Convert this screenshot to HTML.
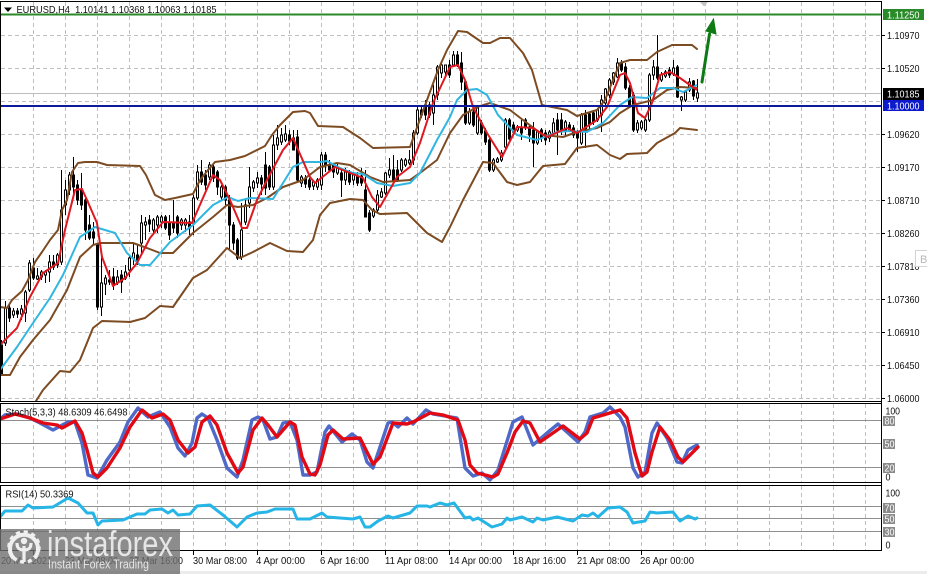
<!DOCTYPE html>
<html><head><meta charset="utf-8"><style>
html,body{margin:0;padding:0;background:#fff;width:927px;height:574px;overflow:hidden}
svg{display:block;position:absolute;left:0;top:0}
text{font-family:"Liberation Sans",sans-serif;font-size:10.5px;fill:#111}
</style></head><body>
<svg width="927" height="574" viewBox="0 0 927 574" xmlns="http://www.w3.org/2000/svg">
<rect width="927" height="574" fill="#fff"/>
<rect x="0" y="571" width="927" height="3" fill="#ececec"/>
<!-- grid -->
<g stroke="#c0c0c0" stroke-width="1" stroke-dasharray="4 3" fill="none" shape-rendering="crispEdges">
<path d="M1 35.5H881M1 68.5H881M1 101.5H881M1 134.5H881M1 167.5H881M1 200.5H881M1 233.5H881M1 266.5H881M1 299.5H881M1 332.5H881M1 365.5H881M1 398.5H881"/>
<path d="M33.5 2V401M65.5 2V401M97.5 2V401M129.5 2V401M161.5 2V401M193.5 2V401M225.5 2V401M257.5 2V401M289.5 2V401M321.5 2V401M353.5 2V401M385.5 2V401M417.5 2V401M449.5 2V401M481.5 2V401M513.5 2V401M545.5 2V401M577.5 2V401M609.5 2V401M641.5 2V401M673.5 2V401M705.5 2V401M737.5 2V401M769.5 2V401M801.5 2V401M833.5 2V401M865.5 2V401"/>
<path d="M33.5 404V483M65.5 404V483M97.5 404V483M129.5 404V483M161.5 404V483M193.5 404V483M225.5 404V483M257.5 404V483M289.5 404V483M321.5 404V483M353.5 404V483M385.5 404V483M417.5 404V483M449.5 404V483M481.5 404V483M513.5 404V483M545.5 404V483M577.5 404V483M609.5 404V483M641.5 404V483M673.5 404V483M705.5 404V483M737.5 404V483M769.5 404V483M801.5 404V483M833.5 404V483M865.5 404V483"/>
<path d="M33.5 486V551M65.5 486V551M97.5 486V551M129.5 486V551M161.5 486V551M193.5 486V551M225.5 486V551M257.5 486V551M289.5 486V551M321.5 486V551M353.5 486V551M385.5 486V551M417.5 486V551M449.5 486V551M481.5 486V551M513.5 486V551M545.5 486V551M577.5 486V551M609.5 486V551M641.5 486V551M673.5 486V551M705.5 486V551M737.5 486V551M769.5 486V551M801.5 486V551M833.5 486V551M865.5 486V551"/>
</g>
<path d="M1 93.5H881" stroke="#bdbdbd" stroke-width="1" shape-rendering="crispEdges"/>
<path d="M1 420.5H881M1 443.5H881M1 467.5H881M1 506.5H881M1 518.5H881M1 531.5H881" stroke="#8f8f8f" stroke-width="1" shape-rendering="crispEdges"/>
<!-- candles -->
<path shape-rendering="crispEdges" stroke="#000" stroke-width="1" fill="none" d="M1.5 340V375M5.5 301V346M9.5 305V322M13.5 308V318M17.5 308V318M21.5 305V320M25.5 290V322M29.5 260V292M33.5 258V280M37.5 268V280M41.5 270V280M45.5 270V283M49.5 255V282M53.5 255V270M57.5 253V268M61.5 170V265M65.5 180V215M69.5 172V195M73.5 157V195M77.5 180V205M81.5 173V210M85.5 195V240M89.5 215V240M93.5 222V245M97.5 243V310M101.5 250V316M105.5 275V295M109.5 270V285M113.5 268V290M117.5 270V285M121.5 270V293M125.5 265V280M129.5 255V277M133.5 243V265M137.5 245V265M141.5 215V255M145.5 217V240M149.5 215V232M153.5 218V235M157.5 215V233M161.5 215V228M165.5 215V230M169.5 215V240M173.5 200V233M177.5 215V238M181.5 218V230M185.5 218V232M189.5 215V235M193.5 195V235M197.5 165V200M201.5 160V185M205.5 170V190M209.5 162V180M213.5 165V182M217.5 170V195M221.5 185V200M225.5 185V205M229.5 195V250M233.5 222V250M237.5 238V260M241.5 203V260M245.5 200V225M249.5 167V208M253.5 180V192M257.5 172V188M261.5 175V195M265.5 152V195M269.5 165V190M273.5 135V190M277.5 125V150M281.5 128V145M285.5 125V142M289.5 130V145M293.5 130V150M297.5 130V182M301.5 175V187M305.5 175V188M309.5 178V190M313.5 180V190M317.5 178V190M321.5 152V190M325.5 152V172M329.5 160V172M333.5 163V178M337.5 163V175M341.5 170V197M345.5 168V185M349.5 170V185M353.5 172V185M357.5 172V186M361.5 168V186M365.5 170V217M369.5 210V232M373.5 208V218M377.5 190V212M381.5 188V198M385.5 172V195M389.5 158V178M393.5 155V182M397.5 160V182M401.5 158V172M405.5 158V167M409.5 150V165M413.5 130V165M417.5 107V135M421.5 105V118M425.5 100V120M429.5 102V118M433.5 85V125M437.5 65V100M441.5 62V78M445.5 65V78M449.5 60V78M453.5 51V67M457.5 51V67M461.5 52V90M465.5 80V125M469.5 108V125M473.5 108V127M477.5 105V135M481.5 120V135M485.5 128V145M489.5 138V172M493.5 158V172M497.5 157V163M501.5 150V162M505.5 118V150M509.5 118V141M513.5 122V135M517.5 125V132M521.5 120V140M525.5 118V130M529.5 125V142M533.5 122V167M537.5 130V145M541.5 128V142M545.5 130V145M549.5 130V142M553.5 118V135M557.5 113V155M561.5 113V135M565.5 120V135M569.5 122V132M573.5 125V138M577.5 130V152M581.5 113V145M585.5 110V148M589.5 112V130M593.5 110V125M597.5 108V122M601.5 95V132M605.5 88V105M609.5 78V98M613.5 72V85M617.5 58V78M621.5 60V72M625.5 63V90M629.5 85V107M633.5 92V132M637.5 120V133M641.5 120V130M645.5 118V132M649.5 73V122M653.5 60V80M657.5 35V80M661.5 72V82M665.5 70V78M669.5 67V78M673.5 60V76M677.5 65V98M681.5 96V111M685.5 91V102M689.5 78V92M693.5 80V100M697.5 79V102"/>
<path shape-rendering="crispEdges" stroke="#000" stroke-width="1" fill="#fff" d="M4.5 308h2V343h-2zM12.5 311h2V315h-2zM20.5 309h2V314h-2zM24.5 292h2V313h-2zM28.5 263h2V290h-2zM36.5 276h2V279h-2zM40.5 272h2V277h-2zM44.5 272h2V275h-2zM48.5 262h2V272h-2zM56.5 255h2V265h-2zM60.5 210h2V262h-2zM64.5 190h2V205h-2zM68.5 175h2V190h-2zM100.5 283h2V307h-2zM104.5 278h2V284h-2zM116.5 277h2V282h-2zM124.5 272h2V278h-2zM128.5 258h2V270h-2zM132.5 253h2V258h-2zM140.5 223h2V243h-2zM144.5 222h2V225h-2zM152.5 220h2V230h-2zM156.5 217h2V225h-2zM160.5 217h2V222h-2zM180.5 220h2V225h-2zM184.5 220h2V225h-2zM192.5 198h2V223h-2zM196.5 172h2V198h-2zM208.5 165h2V177h-2zM220.5 187h2V197h-2zM240.5 230h2V257h-2zM244.5 205h2V222h-2zM248.5 187h2V203h-2zM252.5 182h2V188h-2zM256.5 178h2V183h-2zM272.5 145h2V187h-2zM276.5 138h2V145h-2zM280.5 135h2V142h-2zM284.5 134h2V140h-2zM300.5 177h2V183h-2zM312.5 182h2V186h-2zM316.5 180h2V187h-2zM320.5 155h2V185h-2zM336.5 168h2V173h-2zM344.5 172h2V180h-2zM352.5 175h2V180h-2zM372.5 210h2V216h-2zM376.5 195h2V210h-2zM380.5 192h2V197h-2zM384.5 173h2V193h-2zM388.5 170h2V175h-2zM400.5 160h2V170h-2zM404.5 160h2V165h-2zM408.5 160h2V163h-2zM412.5 133h2V160h-2zM416.5 110h2V133h-2zM432.5 95h2V113h-2zM436.5 67h2V95h-2zM440.5 65h2V73h-2zM444.5 65h2V72h-2zM452.5 55h2V65h-2zM468.5 112h2V123h-2zM476.5 108h2V133h-2zM492.5 160h2V170h-2zM496.5 159h2V162h-2zM500.5 153h2V160h-2zM504.5 120h2V147h-2zM516.5 127h2V130h-2zM536.5 132h2V143h-2zM548.5 132h2V138h-2zM552.5 123h2V133h-2zM564.5 122h2V130h-2zM580.5 115h2V143h-2zM596.5 110h2V120h-2zM600.5 100h2V115h-2zM604.5 89h2V103h-2zM608.5 80h2V95h-2zM612.5 73h2V82h-2zM616.5 63h2V77h-2zM636.5 123h2V130h-2zM640.5 122h2V128h-2zM644.5 120h2V130h-2zM648.5 75h2V120h-2zM652.5 67h2V75h-2zM660.5 75h2V80h-2zM664.5 72h2V76h-2zM672.5 68h2V74h-2zM680.5 97h2V100h-2zM684.5 92h2V100h-2zM688.5 82h2V90h-2zM696.5 93h2V98h-2z"/>
<path shape-rendering="crispEdges" stroke="#000" stroke-width="1" fill="#000" d="M.5 345h2V375h-2zM8.5 308h2V318h-2zM16.5 311h2V314h-2zM32.5 268h2V278h-2zM52.5 262h2V267h-2zM72.5 175h2V187h-2zM76.5 185h2V200h-2zM80.5 190h2V205h-2zM84.5 200h2V230h-2zM88.5 225h2V238h-2zM92.5 232h2V238h-2zM96.5 245h2V307h-2zM108.5 280h2V282h-2zM112.5 277h2V285h-2zM120.5 275h2V282h-2zM136.5 255h2V260h-2zM148.5 220h2V224h-2zM164.5 217h2V228h-2zM168.5 223h2V235h-2zM172.5 222h2V228h-2zM176.5 217h2V233h-2zM188.5 222h2V228h-2zM200.5 172h2V182h-2zM204.5 175h2V185h-2zM212.5 167h2V178h-2zM216.5 172h2V187h-2zM224.5 187h2V200h-2zM228.5 200h2V225h-2zM232.5 225h2V243h-2zM236.5 240h2V258h-2zM260.5 178h2V184h-2zM264.5 165h2V188h-2zM268.5 167h2V187h-2zM288.5 135h2V141h-2zM292.5 138h2V150h-2zM296.5 137h2V180h-2zM304.5 178h2V184h-2zM308.5 180h2V187h-2zM324.5 155h2V165h-2zM328.5 165h2V170h-2zM332.5 165h2V172h-2zM340.5 173h2V180h-2zM348.5 172h2V182h-2zM356.5 176h2V183h-2zM360.5 176h2V183h-2zM364.5 190h2V217h-2zM368.5 213h2V230h-2zM392.5 170h2V180h-2zM396.5 170h2V180h-2zM420.5 110h2V115h-2zM424.5 105h2V115h-2zM428.5 105h2V115h-2zM448.5 65h2V75h-2zM456.5 55h2V65h-2zM460.5 63h2V82h-2zM464.5 82h2V123h-2zM472.5 112h2V125h-2zM480.5 123h2V133h-2zM484.5 131h2V142h-2zM488.5 140h2V170h-2zM508.5 120h2V139h-2zM512.5 125h2V132h-2zM520.5 127h2V133h-2zM524.5 120h2V128h-2zM528.5 127h2V135h-2zM532.5 130h2V143h-2zM540.5 130h2V138h-2zM544.5 133h2V140h-2zM556.5 120h2V130h-2zM560.5 120h2V130h-2zM568.5 125h2V130h-2zM572.5 128h2V135h-2zM576.5 133h2V138h-2zM584.5 115h2V130h-2zM588.5 114h2V125h-2zM592.5 113h2V122h-2zM620.5 63h2V70h-2zM624.5 67h2V88h-2zM628.5 88h2V105h-2zM632.5 95h2V130h-2zM656.5 67h2V78h-2zM668.5 70h2V75h-2zM676.5 67h2V97h-2zM692.5 81h2V96h-2z"/>
<!-- bollinger -->
<g fill="none" stroke="#7d4b22" stroke-width="2" stroke-linejoin="round" stroke-linecap="round">
<polyline points="0,307 7,308 12,300 22,291 28,280 35,262 42,252 50,240 58,230 62,210 67,200 72,172 78,163 85,162 97,162 107,165 140,166 146,175 155,195 165,200 175,198 193,194 200,180 208,170 215,162 230,160 245,156 265,146 272,135 280,125 293,112 305,111 310,113 318,126 343,127 360,138 373,148 410,147 415,133 427,100 438,70 447,50 458,31 467,32 483,43 490,43 500,38 510,38 523,53 532,70 542,105 567,110 577,116 597,110 605,100 613,80 620,63 630,60 647,60 657,52 672,45 692,45 697,49"/>
<polyline points="0,375 10,375 20,357 33,340 50,320 67,290 80,257 93,245 100,243 133,243 147,248 160,253 173,253 193,233 213,217 227,205 238,207 253,205 267,198 283,187 303,180 320,167 337,163 350,165 370,177 383,182 410,180 420,173 437,160 450,133 463,115 477,107 490,103 510,110 523,120 543,135 563,137 577,132 597,128 610,122 620,113 633,105 653,100 667,90 680,87 697,88"/>
<polyline points="36,401 43,390 60,371 70,372 80,360 93,328 102,321 130,322 145,318 160,306 173,307 193,278 207,270 227,248 240,258 253,252 270,243 287,251 303,252 313,240 320,215 330,203 350,199 363,200 372,210 380,214 407,213 417,223 427,233 442,242 450,227 463,200 483,162 493,163 507,182 517,185 530,182 543,166 565,164 577,148 597,145 610,155 620,159 627,154 647,153 657,143 675,133 680,128 697,130"/>
</g>
<polyline fill="none" stroke="#2fb6e2" stroke-width="2" stroke-linejoin="round" points="0,370 17,347 33,323 50,298 63,275 80,237 95,227 115,233 127,253 140,265 150,265 170,242 193,225 213,205 228,197 238,201 250,198 273,199 293,167 303,162 320,162 327,161 340,168 353,173 363,174 377,183 393,186 410,183 420,173 437,140 450,117 457,100 467,90 477,89 487,95 498,115 517,135 537,140 557,132 570,131 587,132 603,123 620,105 632,97 647,98 660,88 673,88 683,92 697,85"/>
<polyline fill="none" stroke="#df1720" stroke-width="2" stroke-linejoin="round" points="0,345 17,328 30,297 43,273 58,263 65,230 75,190 82,189 87,200 97,223 102,257 113,286 125,278 137,263 150,238 163,222 192,223 213,175 220,180 230,200 242,228 247,228 257,200 267,180 283,150 293,138 310,177 315,183 335,167 363,178 372,197 380,207 397,177 410,167 420,143 433,103 450,67 458,65 465,80 473,107 487,133 502,157 517,127 533,128 547,137 567,128 577,133 597,120 607,107 620,75 625,73 630,83 638,113 645,118 652,103 660,75 670,72 680,78 697,90"/>
<!-- levels -->
<path d="M1 14.5H881" stroke="#2a8a2a" stroke-width="2"/>
<path d="M1 106H881" stroke="#0d1a9c" stroke-width="2"/>
<path d="M702 82L709.5 34" stroke="#0e7a14" stroke-width="3" fill="none" stroke-linecap="round"/>
<path d="M713.5 19L716 34L706 31Z" fill="#0e7a14" stroke="#0e7a14" stroke-width="1"/>
<path d="M700 2H708L704 6.5Z" fill="#c4c4c4"/>
<!-- stoch -->
<g fill="none" stroke-width="3.4" stroke-linejoin="round" stroke-linecap="round">
<polyline stroke="#4f69c8" points="0,419 5,415 17,414 30,418 40,423 53,430 68,422 75,422 82,443 88,475 97,478 107,460 120,442 128,422 138,408 148,417 160,412 170,427 178,448 185,456 192,443 197,418 202,414 208,418 217,440 227,468 237,477 243,460 252,420 258,417 263,420 270,439 277,437 283,423 290,422 297,440 303,475 310,475 317,472 325,432 329,426 342,442 352,434 360,440 367,462 373,468 388,423 392,422 398,427 407,418 413,424 426,410 433,414 457,418 465,468 473,476 482,473 490,480 498,470 513,422 522,417 533,445 547,433 558,424 578,442 585,432 590,417 603,413 610,407 620,417 625,427 633,468 638,477 645,472 652,433 657,423 667,438 677,462 682,463 688,450 697,445"/>
<polyline stroke="#e10a14" points="0,419 15,414 30,418 43,423 57,425 62,428 75,421 82,433 87,450 93,473 98,477 107,468 120,448 130,427 142,410 152,418 163,414 170,420 178,440 188,453 195,447 202,422 210,416 217,425 227,453 238,473 243,467 253,430 262,418 268,425 277,437 290,422 295,425 302,457 310,474 315,475 320,465 328,435 333,430 343,439 360,438 365,448 373,464 380,457 393,423 407,424 413,422 430,413 443,415 458,420 465,440 470,465 477,473 493,477 498,474 507,453 515,432 523,421 530,423 540,442 563,426 580,439 587,433 593,418 610,413 620,410 627,418 635,453 642,476 647,472 652,452 660,427 670,440 678,457 683,462 698,447"/>
<polyline stroke="#25b5e6" stroke-width="3" points="0,517 5,511 22,511 28,505 33,508 53,507 68,498 78,503 87,513 93,513 98,525 102,521 123,520 137,514 145,514 150,510 162,509 168,513 173,510 178,515 190,514 197,506 210,505 223,515 237,527 247,517 257,513 267,512 275,509 293,509 297,519 310,519 322,513 327,517 353,519 360,517 365,527 370,527 378,521 388,516 393,518 410,513 417,506 427,506 430,507 440,503 447,505 454,503 465,518 470,517 473,520 478,518 492,527 502,524 507,518 510,520 522,517 533,522 537,518 543,520 557,517 573,521 582,515 588,516 593,513 598,517 608,508 620,507 627,512 633,523 645,521 650,512 657,513 673,512 680,521 688,516 695,519 697,518"/>
</g>
<!-- frames -->
<g stroke="#000" stroke-width="1" fill="none" shape-rendering="crispEdges">
<path d="M0 1.5H882M0.5 1V402M881.5 1V551M0 401.5H882M0 403.5H882M0 482.5H882M0 485.5H882M0 550.5H882M0.5 404V482M0.5 486V550"/>
<path d="M882 35.5h3M882 68.5h3M882 134.5h3M882 167.5h3M882 200.5h3M882 233.5h3M882 266.5h3M882 299.5h3M882 332.5h3M882 365.5h3M882 398.5h3"/>
<path d="M33.5 551v4M97.5 551v4M161.5 551v4M193.5 551v4M257.5 551v4M321.5 551v4M385.5 551v4M449.5 551v4M513.5 551v4M577.5 551v4M641.5 551v4"/>
</g>
<!-- title -->
<path d="M4 7.5H12L8 12Z" fill="#000"/>
<text x="16.5" y="13" textLength="200" lengthAdjust="spacingAndGlyphs" xml:space="preserve">EURUSD,H4  1.10141 1.10368 1.10063 1.10185</text>
<text x="5.5" y="415.5" textLength="122" lengthAdjust="spacingAndGlyphs">Stoch(5,3,3) 48.6309 46.6498</text>
<text x="5.5" y="497.5" textLength="68" lengthAdjust="spacingAndGlyphs">RSI(14) 50.3369</text>
<!-- price labels -->
<rect x="883" y="9" width="41" height="11" fill="#2a8a2a"/>
<rect x="883" y="88" width="41" height="12" fill="#000"/>
<rect x="883" y="100" width="41" height="11" fill="#0d1acb"/>
<g>
<text x="887" y="18.5" textLength="32.5" lengthAdjust="spacingAndGlyphs" style="fill:#fff">1.11250</text>
<text x="887" y="39" textLength="32.5" lengthAdjust="spacingAndGlyphs">1.10970</text>
<text x="887" y="72" textLength="32.5" lengthAdjust="spacingAndGlyphs">1.10520</text>
<text x="887" y="97.5" textLength="32.5" lengthAdjust="spacingAndGlyphs" style="fill:#fff">1.10185</text>
<text x="887" y="109.5" textLength="32.5" lengthAdjust="spacingAndGlyphs" style="fill:#fff">1.10000</text>
<text x="887" y="138" textLength="32.5" lengthAdjust="spacingAndGlyphs">1.09620</text>
<text x="887" y="171" textLength="32.5" lengthAdjust="spacingAndGlyphs">1.09170</text>
<text x="887" y="204" textLength="32.5" lengthAdjust="spacingAndGlyphs">1.08710</text>
<text x="887" y="237" textLength="32.5" lengthAdjust="spacingAndGlyphs">1.08260</text>
<text x="887" y="270" textLength="32.5" lengthAdjust="spacingAndGlyphs">1.07810</text>
<text x="887" y="303" textLength="32.5" lengthAdjust="spacingAndGlyphs">1.07360</text>
<text x="887" y="336" textLength="32.5" lengthAdjust="spacingAndGlyphs">1.06910</text>
<text x="887" y="369" textLength="32.5" lengthAdjust="spacingAndGlyphs">1.06450</text>
<text x="887" y="402" textLength="32.5" lengthAdjust="spacingAndGlyphs">1.06000</text>
</g>
<rect x="915.5" y="250.5" width="14" height="16" fill="#fff" stroke="#d4d4d4"/>
<text x="920" y="263" style="font-size:11px;fill:#b8b8b8">B</text>
<!-- pane scales -->
<path d="M883 416h12v10h-12zM883 439h12v10h-12zM883 463h12v10h-12zM883 503h12v10h-12zM883 514h12v10h-12zM883 527h12v10h-12z" fill="#8a8a8a"/>
<text x="885.5" y="414.5" textLength="14.5" lengthAdjust="spacingAndGlyphs">100</text>
<text x="884.5" y="424.5" textLength="10" lengthAdjust="spacingAndGlyphs" style="fill:#fff">80</text>
<text x="884.5" y="447.5" textLength="10" lengthAdjust="spacingAndGlyphs" style="fill:#fff">50</text>
<text x="884.5" y="471.5" textLength="10" lengthAdjust="spacingAndGlyphs" style="fill:#fff">20</text>
<text x="885.5" y="480.5" textLength="5" lengthAdjust="spacingAndGlyphs">0</text>
<text x="885.5" y="496.5" textLength="14.5" lengthAdjust="spacingAndGlyphs">100</text>
<text x="884.5" y="511.5" textLength="10" lengthAdjust="spacingAndGlyphs" style="fill:#fff">70</text>
<text x="884.5" y="522.5" textLength="10" lengthAdjust="spacingAndGlyphs" style="fill:#fff">50</text>
<text x="884.5" y="535.5" textLength="10" lengthAdjust="spacingAndGlyphs" style="fill:#fff">30</text>
<text x="885.5" y="548.5" textLength="5" lengthAdjust="spacingAndGlyphs">0</text>
<!-- time labels -->
<g>
<text x="1" y="564" textLength="51" lengthAdjust="spacingAndGlyphs">20 Mar 2021</text>
<text x="65" y="564" textLength="53" lengthAdjust="spacingAndGlyphs">23 Mar 08:00</text>
<text x="129" y="564" textLength="54" lengthAdjust="spacingAndGlyphs">27 Mar 16:00</text>
<text x="193" y="564" textLength="54" lengthAdjust="spacingAndGlyphs">30 Mar 08:00</text>
<text x="256" y="564" textLength="49" lengthAdjust="spacingAndGlyphs">4 Apr 00:00</text>
<text x="320" y="564" textLength="49" lengthAdjust="spacingAndGlyphs">6 Apr 16:00</text>
<text x="385" y="564" textLength="53" lengthAdjust="spacingAndGlyphs">11 Apr 08:00</text>
<text x="449" y="564" textLength="53" lengthAdjust="spacingAndGlyphs">14 Apr 00:00</text>
<text x="513" y="564" textLength="53" lengthAdjust="spacingAndGlyphs">18 Apr 16:00</text>
<text x="577" y="564" textLength="53" lengthAdjust="spacingAndGlyphs">21 Apr 08:00</text>
<text x="640" y="564" textLength="54" lengthAdjust="spacingAndGlyphs">26 Apr 00:00</text>
</g>
<!-- logo -->
<rect x="0" y="529" width="180" height="45" fill="#6f6f6f" opacity="0.8"/>
<g fill="none" stroke="#efefef">
<circle cx="24" cy="547" r="15" stroke-width="3.5" stroke-dasharray="4.2 3.6"/>
<path d="M13.5 558A14 14 0 1 1 34.5 558" stroke-width="4"/>
<path d="M24 546V562M17 543C17 549 20 550 24 550C28 550 31 549 31 543" stroke-width="3.2"/>
</g>
<circle cx="24" cy="541" r="3.2" fill="#efefef"/>
<text x="47" y="556" textLength="126" lengthAdjust="spacingAndGlyphs" style="font-size:36px;fill:#e6e6e6">instaforex</text>
<text x="48" y="568.5" textLength="101" lengthAdjust="spacingAndGlyphs" style="font-size:12.5px;fill:#e4e4e4">Instant Forex Trading</text>
</svg>
</body></html>
